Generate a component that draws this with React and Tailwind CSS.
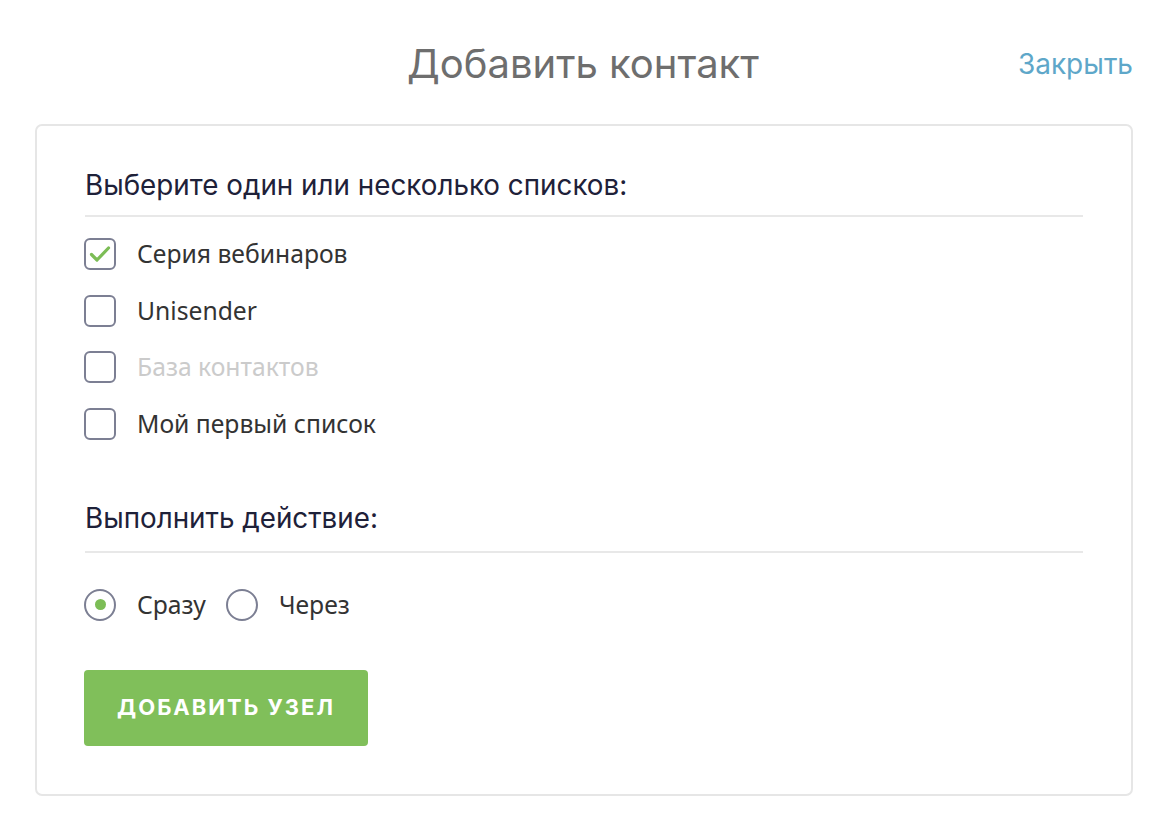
import React, { useState } from "react";

const lists = [
  { name: "Серия вебинаров", checked: true },
  { name: "Unisender", checked: false },
  { name: "База контактов", checked: false, disabled: true },
  { name: "Мой первый список", checked: false },
];

function CheckBox({ checked }) {
  return (
    <span className="flex h-[32px] w-[32px] shrink-0 items-center justify-center rounded-[6px] border-2 border-[#7c7f93] bg-white">
      {checked && (
        <svg width="22" height="18" viewBox="0 0 22 18" fill="none">
          <path d="M2.5 9.5l5.5 5.5L19.5 3" stroke="#7cbd56" strokeWidth="3.2" strokeLinecap="round" strokeLinejoin="round" />
        </svg>
      )}
    </span>
  );
}

function Radio({ checked }) {
  return (
    <span className="flex h-[32px] w-[32px] shrink-0 items-center justify-center rounded-full border-2 border-[#7c7f93] bg-white">
      {checked && <span className="h-[11px] w-[11px] rounded-full bg-[#7cbd56]" />}
    </span>
  );
}

export default function App() {
  const [mode] = useState("now");

  return (
    <div className="min-h-[824px] w-[1172px] bg-white font-['Inter',sans-serif]">
      <header className="relative flex h-[124px] items-start justify-center pt-[38px]">
        <h1 className="-ml-[6px] text-[40px] leading-[52px] font-normal text-[#6e6e6e]">Добавить контакт</h1>
        <button className="absolute right-[39px] top-[44px] text-[28px] leading-[40px] text-[#5ea7c9]">Закрыть</button>
      </header>

      <section className="ml-[35px] w-[1098px] rounded-[7px] border-2 border-[#e6e6e6] pl-[47px] pr-[48px] pt-[42px] pb-[48px]">
        <h2 className="ml-px text-[27.8px] leading-[34px] text-[#1e2139]">Выберите один или несколько списков:</h2>
        <div className="mt-[13px] ml-px h-[2px] bg-[#e8e8e8]" />

        <ul className="mt-[21px] flex flex-col gap-[24.5px]">
          {lists.map((l) => (
            <li key={l.name} className="flex h-[32px] items-center gap-[21px]">
              <CheckBox checked={l.checked} />
              <span
                className={`font-['Noto_Sans',sans-serif] text-[24.7px] leading-[32px] ${
                  l.disabled ? "text-[#cbcbcb]" : "text-[#333333]"
                }`}
              >
                {l.name}
              </span>
            </li>
          ))}
        </ul>

        <h2 className="mt-[61px] ml-px text-[27.8px] leading-[34px] text-[#1e2139]">Выполнить действие:</h2>
        <div className="mt-[16px] ml-px h-[2px] bg-[#e8e8e8]" />

        <div className="mt-[36px] flex h-[32px] items-center">
          <Radio checked={mode === "now"} />
          <span className="ml-[21px] font-['Noto_Sans',sans-serif] text-[24.7px] leading-[32px] text-[#333333]">Сразу</span>
          <span className="ml-[20px]">
            <Radio checked={mode === "later"} />
          </span>
          <span className="ml-[21px] font-['Noto_Sans',sans-serif] text-[24.7px] leading-[32px] text-[#333333]">Через</span>
        </div>

        <button className="mt-[49px] flex h-[76px] w-[284px] items-center justify-center rounded-[4px] bg-[#80bf5a] text-[22px] font-bold tracking-[2px] text-white">
          ДОБАВИТЬ УЗЕЛ
        </button>
      </section>
    </div>
  );
}
